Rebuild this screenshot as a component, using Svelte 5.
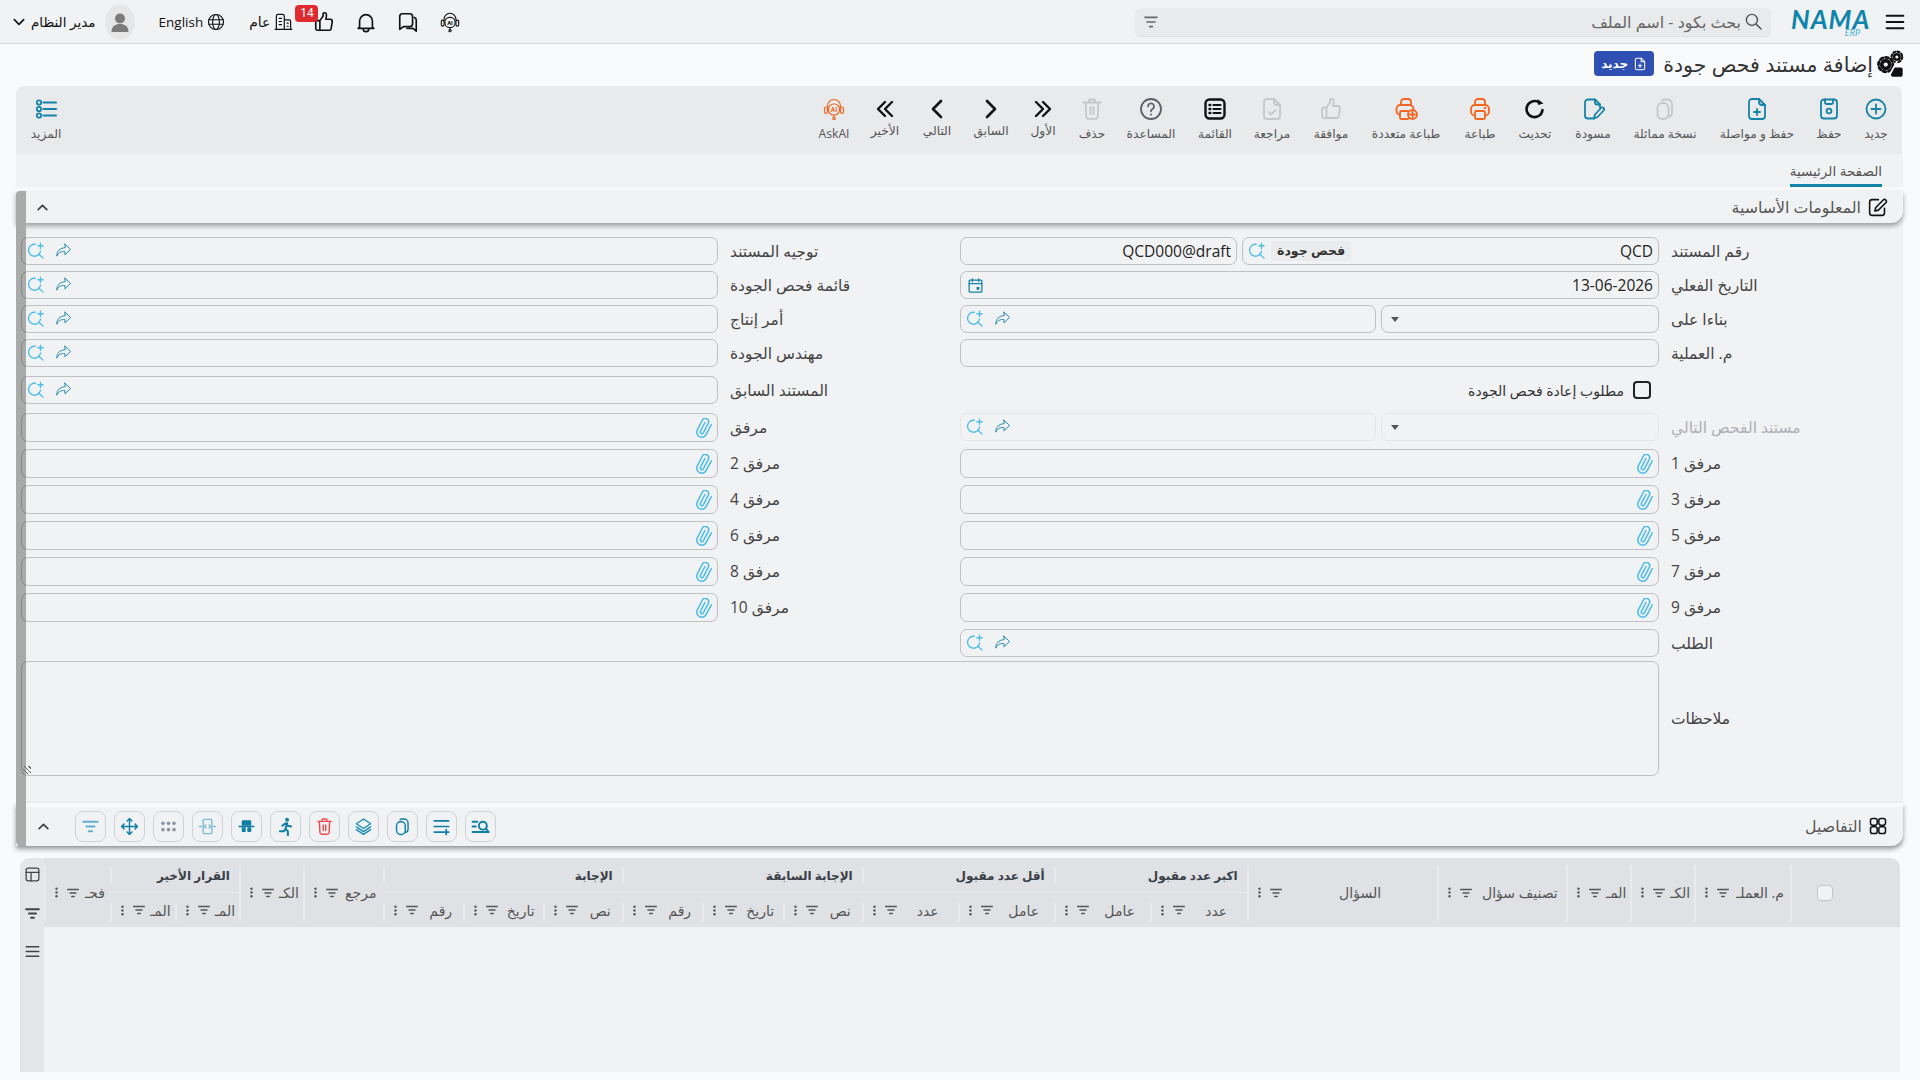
<script lang="ts">
    const I: Record<string, string> = {
        plusCircle: '<circle cx="12" cy="12" r="9.5"/><path d="M12 7.5v9M7.5 12h9"/>',
        save: '<path d="M7 2.5h10a3 3 0 0 1 3 3v13a3 3 0 0 1-3 3H7a3 3 0 0 1-3-3v-13a3 3 0 0 1 3-3z"/><path d="M8 2.5v3a1.5 1.5 0 0 0 1.5 1.5h5A1.5 1.5 0 0 0 16 5.5v-3"/><circle cx="12" cy="14" r="2.4"/>',
        filePlus: '<path d="M7 2h7l6 6v11a3 3 0 0 1-3 3H7a3 3 0 0 1-3-3V5a3 3 0 0 1 3-3z"/><path d="M14 2v3a3 3 0 0 0 3 3h3"/><path d="M12 12v6M9 15h6"/>',
        copy: '<rect x="4.5" y="6" width="11" height="16" rx="5"/><path d="M9 3.5a3 3 0 0 1 2-1h3a5 5 0 0 1 5 5v8a4 4 0 0 1-3.5 4"/>',
        draft: '<path d="M13 21.5H7a3 3 0 0 1-3-3v-13a3 3 0 0 1 3-3h7l5 5v3"/><path d="M14 2.5v3a2 2 0 0 0 2 2h3"/><path d="M13 21.5l1-4 6-6.5a1.8 1.8 0 0 1 2.6 2.5l-6 6.5z"/>',
        refresh: '<path d="M19.5 13a8 8 0 1 1-3-7.2" stroke-width="2.6"/><path d="M14.5 2l.5 6 5.5-1.5z" fill="currentColor" stroke="none"/>',
        print: '<path d="M7 8V5a3 3 0 0 1 3-3h4a3 3 0 0 1 3 3v3"/><rect x="3" y="8" width="18" height="10.5" rx="4"/><rect x="7" y="14" width="10" height="8" rx="1.5" fill="#e9eaec"/><path d="M16.5 11h1"/>',
        printMulti: '<path d="M7 8V5a3 3 0 0 1 3-3h4a3 3 0 0 1 3 3v3"/><rect x="2.5" y="8" width="17" height="10" rx="4"/><rect x="6" y="14" width="9" height="8" rx="1.5" fill="#e9eaec"/><circle cx="18.5" cy="17.5" r="4.5" fill="#e9eaec"/><path d="M18.5 15v5M16 17.5h5"/>',
        thumb: '<path d="M7.5 10.5V21H5a2 2 0 0 1-2-2v-6.5a2 2 0 0 1 2-2zm0 0l3.5-5V4a1.8 1.8 0 0 1 3.6-.5c.4 2-.2 4-.6 5.5H19a2 2 0 0 1 2 2.3l-1.2 7.9a2 2 0 0 1-2 1.8H7.5"/>',
        review: '<path d="M7 2h7l6 6v11a3 3 0 0 1-3 3H7a3 3 0 0 1-3-3V5a3 3 0 0 1 3-3z"/><path d="M14 2v3a3 3 0 0 0 3 3h3"/><path d="M8.5 15l2.5 2.5 4.5-4.5"/>',
        list: '<rect x="2.5" y="2.5" width="19" height="19" rx="4" stroke-width="2.4"/><path d="M10.5 8h7M10.5 12h7M10.5 16h7" stroke-width="2.2"/><path d="M6.5 8h.8M6.5 12h.8M6.5 16h.8" stroke-width="2.4"/>',
        help: '<circle cx="12" cy="12" r="10"/><path d="M9 9.3a3 3 0 1 1 4.5 2.7c-1 .6-1.5 1.2-1.5 2.3"/><path d="M12 17.3v.4"/>',
        trash: '<path d="M3.5 5.5h17M9 5V3.5a1 1 0 0 1 1-1h4a1 1 0 0 1 1 1V5"/><path d="M5.5 5.5l.7 14a2.5 2.5 0 0 0 2.5 2.3h6.6a2.5 2.5 0 0 0 2.5-2.3l.7-14"/><path d="M10.5 10v7M13.5 10v7"/>',
        dblRight: '<path d="M5 5l7 7-7 7M12 5l7 7-7 7" stroke-width="2.4"/>',
        dblLeft: '<path d="M12 5l-7 7 7 7M19 5l-7 7 7 7" stroke-width="2.4"/>',
        right: '<path d="M8 4l8 8-8 8" stroke-width="2.6"/>',
        left: '<path d="M16 4l-8 8 8 8" stroke-width="2.6"/>',
        ai: '<g stroke-width="1.2"><path d="M5.5 10V9a6.5 6.5 0 0 1 13 0v1"/><rect x="2.5" y="10" width="3" height="6.5" rx="1.5"/><rect x="18.5" y="10" width="3" height="6.5" rx="1.5"/><rect x="6.5" y="7" width="11" height="11" rx="5"/><path d="M12 18v2.5"/><circle cx="12" cy="21.5" r="1.2"/></g><text x="12" y="14.8" font-size="6.5" font-weight="700" text-anchor="middle" fill="currentColor" stroke="none" font-family="Roboto">AI</text>',
        more: '<circle cx="5" cy="5.5" r="2.2"/><circle cx="5" cy="12" r="2.2"/><circle cx="5" cy="18.5" r="2.2"/><path d="M9.5 5.5H22M9.5 12H22M9.5 18.5H22" stroke-width="2.2"/>',
        menu: '<path d="M2 4.5h20M2 12h20M2 19.5h20" stroke-width="2.4"/>',
        search: '<circle cx="10" cy="10" r="7"/><path d="M15.5 15.5l6 6" stroke-width="2"/>',
        sliders: '<path d="M3 5h18M6 12h12M10 19h4" stroke-width="2.4"/>',
        globe: '<circle cx="12" cy="12" r="10"/><ellipse cx="12" cy="12" rx="4.5" ry="10"/><path d="M2.5 9h19M2.5 15h19"/>',
        building: '<path d="M3 22V5a2 2 0 0 1 2-2h6a2 2 0 0 1 2 2v17M13 10h6a2 2 0 0 1 2 2v10M1.5 22h21"/><path d="M6.5 8h3M6.5 12h3M6.5 16h3M16.5 14h1.5M16.5 18h1.5"/>',
        bell: '<path d="M5 17.5V11a7 7 0 0 1 14 0v6.5l1.5 1.5h-17z"/><path d="M9 19.5a3 3 0 0 0 6 0"/>',
        chat: '<path d="M3 6a3 3 0 0 1 3-3h8a3 3 0 0 1 3 3v8a3 3 0 0 1-3 3H7l-4 3z"/><path d="M19 7a3 3 0 0 1 2 3v12l-3.5-3H11"/>',
        down: '<path d="M4 8l8 8 8-8" stroke-width="2.8"/>',
        up: '<path d="M4 16l8-8 8 8" stroke-width="3.2"/>',
        edit: '<path d="M13 3H6a3 3 0 0 0-3 3v12a3 3 0 0 0 3 3h11a3 3 0 0 0 3-3v-5"/><path d="M9 16l1-4 8.5-8.5a2 2 0 0 1 3 3L13 15z"/>',
        grid: '<rect x="3" y="3" width="8" height="8" rx="2.5"/><rect x="13" y="3" width="8" height="8" rx="2.5"/><rect x="3" y="13" width="8" height="8" rx="2.5"/><rect x="13" y="13" width="8" height="8" rx="2.5"/>',
        move: '<path d="M12 2v20M2 12h20M9 5l3-3 3 3M9 19l3 3 3-3M5 9l-3 3 3 3M19 9l3 3-3 3"/>',
        dots: '<g fill="currentColor" stroke="none"><circle cx="5" cy="8" r="2.3"/><circle cx="12" cy="8" r="2.3"/><circle cx="19" cy="8" r="2.3"/><circle cx="5" cy="16" r="2.3"/><circle cx="12" cy="16" r="2.3"/><circle cx="19" cy="16" r="2.3"/></g>',
        fit: '<rect x="6.5" y="3" width="11" height="18" rx="1.5"/><path d="M2 12h2.5M19.5 12H22M10 10l-2 2 2 2M14 10l2 2-2 2"/>',
        freeze: '<g fill="currentColor" stroke="none"><rect x="6" y="4" width="12" height="7" rx="1"/><rect x="6" y="13" width="5" height="6" rx="1"/><rect x="13" y="13" width="5" height="6" rx="1"/><rect x="2" y="11" width="20" height="2"/></g>',
        run: '<circle cx="14" cy="3.5" r="2.5" fill="currentColor" stroke="none"/><path d="M14 8l-2 7 3 3v5M12 15l-2 3H5M8 11l4-3 3 3 4 1" stroke-width="2.6"/>',
        layers: '<path d="M12 2.5l9 6-9 6-9-6z"/><path d="M3 12.5l9 6 9-6M3 16l9 6 9-6"/>',
        addRow: '<path d="M3 5h18M3 12h18M3 19h11M18 16v6M15 19h6" stroke-width="2.2"/>',
        findRow: '<circle cx="15" cy="11" r="5" stroke-width="2.4"/><path d="M19 15l3.5 4M2 6h6M2 12h4M2 19h20" stroke-width="2.4"/>',
        table: '<rect x="3" y="3" width="18" height="18" rx="3"/><path d="M3 9h18M10 9v12"/>',
        filter: '<path d="M3 6h18M7 12h10M10 18h4" stroke-width="2.8"/>',
        vdots: '<g fill="currentColor" stroke="none"><circle cx="12" cy="5" r="2.2"/><circle cx="12" cy="12" r="2.2"/><circle cx="12" cy="19" r="2.2"/></g>',
        calendar: '<rect x="3" y="4.5" width="18" height="17" rx="1.5"/><path d="M3 9.5h18M7.5 2.5v4M16.5 2.5v4"/><rect x="13.5" y="14" width="4" height="4" fill="currentColor" stroke="none"/>',
        clip: '<path transform="rotate(-18 12 12)" d="M21.4 11l-9.2 9.2a6 6 0 0 1-8.5-8.5l9.200-9.200a4 4 0 0 1 5.700 5.700l-9.200 9.200a2 2 0 0 1-2.800-2.800l8.500-8.500"/>',
        zoomPlus: '<path d="M11 3a8 8 0 1 0 7 9"/><path d="M15.5 16l6 5.500M18 1.500v7M14.500 5h7"/>',
        share: '<path stroke-width="1.3" d="M14 3l8 7.500-8 7.500v-4.500c-5-.5-9 1-11.500 6.500 0-7 4-11.500 11.500-12z"/>',
        avatar: '<circle cx="12" cy="8.500" r="5" fill="currentColor" stroke="none"/><path d="M3.500 22c0-6 4-8 8.500-8s8.500 2 8.500 8z" fill="currentColor" stroke="none"/>',
        docBadge: '<path d="M7 2h7l6 6v11a3 3 0 0 1-3 3H7a3 3 0 0 1-3-3V5a3 3 0 0 1 3-3z"/><path d="M14 2v6h6M12 12v6M9 15h6"/>',
        gear: '<g fill="#111" stroke="none"><circle cx="7.5" cy="12.5" r="5"/><circle cx="7.5" cy="12.5" r="6.2" fill="none" stroke="#111" stroke-width="2.4" stroke-dasharray="2.4 2.4"/><circle cx="7.5" cy="12.5" r="1.8" fill="#f9fafc"/><circle cx="17" cy="6" r="3.5"/><circle cx="17" cy="6" r="4.6" fill="none" stroke="#111" stroke-width="1.8" stroke-dasharray="1.8 1.8"/><circle cx="17" cy="6" r="1.3" fill="#f9fafc"/><rect x="12" y="15" width="10" height="8" rx="1.5"/><path d="M10 23l7-13" stroke="#f9fafc" stroke-width="1.5"/></g>',
    };

    const tools = [
        { label: "جديد", icon: "plusCircle", tone: "teal", w: 48 },
        { label: "حفظ", icon: "save", tone: "teal", w: 46 },
        { label: "حفظ و مواصلة", icon: "filePlus", tone: "teal", w: 98 },
        { label: "نسخة مماثلة", icon: "copy", tone: "off", w: 86 },
        { label: "مسودة", icon: "draft", tone: "teal", w: 58 },
        { label: "تحديث", icon: "refresh", tone: "black", w: 58 },
        { label: "طباعة", icon: "print", tone: "orange", w: 52 },
        { label: "طباعة متعددة", icon: "printMulti", tone: "orange", w: 96 },
        { label: "موافقة", icon: "thumb", tone: "off", w: 54 },
        { label: "مراجعة", icon: "review", tone: "off", w: 64 },
        { label: "القائمة", icon: "list", tone: "black", w: 50 },
        { label: "المساعدة", icon: "help", tone: "slate", w: 78 },
        { label: "حذف", icon: "trash", tone: "off", w: 40 },
        { label: "الأول", icon: "dblRight", tone: "black", w: 58, nav: true },
        { label: "السابق", icon: "right", tone: "black", w: 46, nav: true },
        { label: "التالي", icon: "left", tone: "black", w: 62, nav: true },
        { label: "الأخير", icon: "dblLeft", tone: "black", w: 42, nav: true },
        { label: "AskAI", icon: "ai", tone: "orange", w: 60 },
    ];

    const rows = [
        { label: "رقم المستند", kind: "doc" },
        { label: "توجيه المستند", kind: "lookup" },
        { label: "التاريخ الفعلي", kind: "date" },
        { label: "قائمة فحص الجودة", kind: "lookup" },
        { label: "بناءا على", kind: "pair" },
        { label: "أمر إنتاج", kind: "lookup" },
        { label: "م. العملية", kind: "text" },
        { label: "مهندس الجودة", kind: "lookup" },
        { label: "", kind: "check" },
        { label: "المستند السابق", kind: "lookup" },
        { label: "مستند الفحص التالي", kind: "pair", off: true },
        { label: "مرفق", kind: "attach" },
        { label: "مرفق 1", kind: "attach" },
        { label: "مرفق 2", kind: "attach" },
        { label: "مرفق 3", kind: "attach" },
        { label: "مرفق 4", kind: "attach" },
        { label: "مرفق 5", kind: "attach" },
        { label: "مرفق 6", kind: "attach" },
        { label: "مرفق 7", kind: "attach" },
        { label: "مرفق 8", kind: "attach" },
        { label: "مرفق 9", kind: "attach" },
        { label: "مرفق 10", kind: "attach" },
        { label: "الطلب", kind: "lookup" },
        { label: "", kind: "blank" },
    ];

    const gridTools = [
        { icon: "filter", color: "#5fb0cc" },
        { icon: "move", color: "#0f7fa6" },
        { icon: "dots", color: "#8f95a3" },
        { icon: "fit", color: "#7cbcd2" },
        { icon: "freeze", color: "#0f7fa6" },
        { icon: "run", color: "#0f7fa6" },
        { icon: "trash", color: "#f0484e" },
        { icon: "layers", color: "#1c8db3" },
        { icon: "copy", color: "#0f7fa6" },
        { icon: "addRow", color: "#0f7fa6" },
        { icon: "findRow", color: "#0f7fa6" },
    ];

    const columns = [
        { t: "م. العملـ", w: 96 },
        { t: "الكـ", w: 64 },
        { t: "المـ", w: 64 },
        { t: "تصنيف سؤال", w: 129 },
        { t: "السؤال", w: 191 },
        { group: "اكبر عدد مقبول", kids: [{ t: "عدد", w: 97 }, { t: "عامل", w: 96 }] },
        { group: "أقل عدد مقبول", kids: [{ t: "عامل", w: 96 }, { t: "عدد", w: 96 }] },
        { group: "الإجابة السابقة", kids: [{ t: "نص", w: 79 }, { t: "تاريخ", w: 81 }, { t: "رقم", w: 80 }] },
        { group: "الإجابة", kids: [{ t: "نص", w: 79 }, { t: "تاريخ", w: 80 }, { t: "رقم", w: 80 }] },
        { t: "مرجع", w: 80 },
        { t: "الكـ", w: 64 },
        { group: "القرار الأخير", kids: [{ t: "المـ", w: 64 }, { t: "المـ", w: 65 }] },
        { t: "فحـ", w: 66 },
    ];
</script>

{#snippet icon(name: string, size: number, cls = "")}
    <svg class={cls} width={size} height={size} viewBox="0 0 24 24" fill="none" stroke="currentColor" stroke-width="1.8" stroke-linecap="round" stroke-linejoin="round">{@html I[name]}</svg>
{/snippet}

{#snippet lookupIcons(share = true)}
    <span class="look">
        {#if share}{@render icon("share", 17, "deep")}{/if}
        {@render icon("zoomPlus", 18, "sky")}
    </span>
{/snippet}

{#snippet colCell(c: { t: string; w: number }, sub: boolean)}
    <div class="cell" class:sub style="width: {c.w}px">
        <span class="cell-text">{c.t}</span>
        {@render icon("filter", 14, "cell-filter")}
        {@render icon("vdots", 13, "cell-dots")}
    </div>
{/snippet}

<div class="page" dir="rtl">
    <header class="topbar">
        <span class="burger">{@render icon("menu", 20)}</span>
        <div class="logo">NAMA<small>ERP</small></div>
        <div class="search">
            {@render icon("search", 19, "search-ico")}
            <span class="search-text">بحث بكود - اسم الملف</span>
            {@render icon("sliders", 16, "search-filter")}
        </div>
        <div class="user-bar" dir="ltr">
            {@render icon("down", 14)}
            <span class="user-name">مدير النظام</span>
            <span class="avatar">{@render icon("avatar", 24)}</span>
            <span class="lang">English</span>
            {@render icon("globe", 18, "slim near")}
            <span class="branch">عام</span>
            {@render icon("building", 19, "slim near")}
            <span class="thumb">
                {@render icon("thumb", 22)}
                <b class="badge">14</b>
            </span>
            {@render icon("bell", 22)}
            {@render icon("chat", 22)}
            {@render icon("ai", 22)}
        </div>
    </header>

    <div class="title-row">
        {@render icon("gear", 28)}
        <h1>إضافة مستند فحص جودة</h1>
        <span class="status">{@render icon("docBadge", 14)} جديد</span>
    </div>

    <div class="toolbar">
        {#each tools as t}
            <div class="tool {t.tone}" class:nav={t.nav} style="width: {t.w}px">
                {@render icon(t.icon, 24)}
                <span>{t.label}</span>
            </div>
        {/each}
        <div class="tool teal more">
            {@render icon("more", 24)}
            <span>المزيد</span>
        </div>
    </div>

    <div class="tabs"><span class="tab">الصفحة الرئيسية</span></div>

    <section class="panel">
        <div class="sec-head basic">
            {@render icon("edit", 21, "black")}
            <span>المعلومات الأساسية</span>
            <span class="chev">{@render icon("up", 13)}</span>
        </div>

        <div class="form">
            {#each rows as r}
                {#if r.kind === "check"}
                    <label class="check-field">
                        <span class="box"></span>
                        مطلوب إعادة فحص الجودة
                    </label>
                {:else if r.kind !== "blank"}
                    <div class="lbl" class:off={r.off}>{r.label}</div>
                    {#if r.kind === "doc"}
                        <div class="split">
                            <div class="input chipped">
                                <span class="val">QCD</span>
                                <span class="chip">فحص جودة</span>
                                {@render lookupIcons(false)}
                            </div>
                            <div class="input draft"><span class="val">QCD000@draft</span></div>
                        </div>
                    {:else if r.kind === "date"}
                        <div class="input">
                            <span class="val">13-06-2026</span>
                            {@render icon("calendar", 17, "deep push")}
                        </div>
                    {:else if r.kind === "lookup"}
                        <div class="input">{@render lookupIcons()}</div>
                    {:else if r.kind === "pair"}
                        <div class="split pair" class:off={r.off}>
                            <div class="input select"><span class="caret"></span></div>
                            <div class="input">{@render lookupIcons()}</div>
                        </div>
                    {:else if r.kind === "attach"}
                        <div class="input attach">{@render icon("clip", 20, "sky")}</div>
                    {:else}
                        <div class="input"></div>
                    {/if}
                {:else}
                    <div></div><div></div>
                {/if}
            {/each}
            <div class="lbl notes-lbl">ملاحظات</div>
            <div class="notes"><span class="grip"></span></div>
        </div>

        <div class="sec-head details">
            {@render icon("grid", 20, "black")}
            <span>التفاصيل</span>
            <div class="grid-tools" dir="ltr">
                <span class="chev">{@render icon("up", 13)}</span>
                {#each gridTools as g}
                    <span class="grid-btn" style="color: {g.color}">{@render icon(g.icon, 19)}</span>
                {/each}
            </div>
        </div>
    </section>

    <div class="table">
        <div class="table-main">
            <div class="thead">
                <div class="cell check-cell"><span class="mini-box"></span></div>
                {#each columns as c}
                    {#if c.kids}
                        <div class="group">
                            <div class="group-title">{c.group}</div>
                            <div class="group-kids">
                                {#each c.kids as k}
                                    {@render colCell(k, true)}
                                {/each}
                            </div>
                        </div>
                    {:else}
                        {@render colCell(c, false)}
                    {/if}
                {/each}
            </div>
            <div class="tbody"></div>
        </div>
        <div class="side">
            {@render icon("table", 17)}
            {@render icon("filter", 17)}
            {@render icon("menu", 15)}
        </div>
    </div>
</div>

<style>
    :global(body) {
        margin: 0;
        background: #f9fafc;
    }

    .page {
        width: 1920px;
        height: 1080px;
        overflow: hidden;
        font-family: "Open Sans", "Noto Sans", "DejaVu Sans", sans-serif;
        color: #333;
        background: #f9fafc;
    }

    svg {
        display: block;
        flex: none;
    }

    .sky { color: #4cbce9; }
    .deep { color: #1583a8; }
    .black { color: #111; }
    .slim { stroke-width: 1.5; }

    .topbar {
        display: flex;
        align-items: center;
        height: 43px;
        border-bottom: 1px solid #d6d7d9;
        background: #f1f2f4;
    }

    .burger {
        margin-right: 15px;
        color: #111;
    }

    .logo {
        position: relative;
        width: 79px;
        height: 28px;
        margin-right: 15px;
        direction: ltr;
        font: italic 700 26px/22px Lato, sans-serif;
        letter-spacing: 1px;
        color: #0f84aa;
    }

    .logo small {
        position: absolute;
        right: 10px;
        top: 20px;
        font-size: 9px;
        font-weight: 400;
        line-height: 10px;
        letter-spacing: 0;
        color: #4bb0cc;
    }

    .search {
        display: flex;
        align-items: center;
        width: 636px;
        height: 28px;
        margin-right: 20px;
        padding: 0 8px;
        box-sizing: border-box;
        border-radius: 6px;
        background: #e9eaec;
        box-shadow: 0 1px 1px rgba(0, 0, 0, .08);
        color: #555;
    }

    .search-text {
        margin-right: 3px;
        font-size: 16px;
        color: #666;
    }

    .search-filter {
        margin-right: auto;
        color: #666;
    }

    .user-bar {
        display: flex;
        align-items: center;
        margin-right: auto;
        padding-left: 12px;
        color: #111;
    }

    .user-name {
        margin-left: 5px;
        font-size: 13.5px;
    }

    .avatar {
        display: flex;
        align-items: center;
        justify-content: center;
        width: 30px;
        height: 36px;
        margin-left: 9px;
        border-radius: 50%;
        background: #e6e6e7;
        color: #7b7b7c;
    }

    .lang {
        margin-left: 24px;
        font-size: 13.5px;
    }

    .user-bar > svg:first-child { margin-left: 0; }
    .user-bar > .near { margin-left: 4px; }

    .branch {
        margin-left: 24px;
        font-size: 14px;
    }

    .thumb {
        position: relative;
        margin-left: 20px;
    }

    .user-bar > .thumb + svg { margin-left: 20px; }
    .user-bar > .thumb + svg + svg { margin-left: 20px; }
    .user-bar > .thumb + svg + svg + svg { margin-left: 20px; }

    .badge {
        position: absolute;
        left: -18px;
        top: -6px;
        min-width: 23px;
        height: 17px;
        border-radius: 4px;
        background: #e02a2f;
        color: #fff;
        font: 400 12px/17px Roboto, sans-serif;
        text-align: center;
    }

    .title-row {
        display: flex;
        align-items: center;
        gap: 4px;
        height: 42px;
        padding-right: 15px;
        padding-bottom: 3px;
        box-sizing: border-box;
    }

    h1 {
        margin: 0;
        font-size: 20.5px;
        font-weight: 400;
        color: #333;
    }

    .status {
        display: flex;
        align-items: center;
        gap: 5px;
        height: 25px;
        margin-right: 5px;
        padding: 0 7px;
        border-radius: 4px;
        background: #2f4fb2;
        color: #fff;
        font-size: 12px;
        font-weight: 700;
    }

    .toolbar {
        display: flex;
        height: 68px;
        margin: 0 18px 0 16px;
        padding-right: 2px;
        border-radius: 8px 8px 0 0;
        background: #e9eaec;
    }

    .tool {
        display: flex;
        flex-direction: column;
        align-items: center;
        padding-top: 11px;
        box-sizing: border-box;
    }

    .tool span {
        margin-top: 5px;
        font-size: 12.2px;
        line-height: 16px;
        white-space: nowrap;
        color: #555;
    }

    .tool.nav span { margin-top: 2px; }
    .tool.teal { color: #1583a8; }
    .tool.orange { color: #f06520; }
    .tool.black { color: #111; }
    .tool.slate { color: #5c626d; }
    .tool.off { color: #c5c7ca; }
    .tool.more {
        width: 60px;
        margin-right: auto;
    }

    .tabs {
        display: flex;
        height: 33px;
        margin: 0 17px 0 16px;
        padding-right: 21px;
        background: #f1f2f4;
    }

    .tab {
        height: 30px;
        border-bottom: 3px solid #1583a8;
        font-size: 13.5px;
        line-height: 34px;
        color: #555;
    }

    .panel {
        position: relative;
        height: 656px;
        margin: 4px 17px 0 16px;
        background: #f1f2f4;
    }

    .panel::before {
        content: "";
        position: absolute;
        z-index: 1;
        left: 0;
        top: 0;
        width: 10px;
        height: 656px;
        border-radius: 4px 0 0 6px;
        background: #a9aaaa;
    }

    .sec-head {
        display: flex;
        align-items: center;
        gap: 6px;
        padding-right: 15px;
        border-radius: 0 0 12px 0;
        box-shadow: 0 3px 5px rgba(0, 0, 0, .35);
        background: #f1f2f4;
        font-size: 15.8px;
        color: #555;
    }

    .basic {
        height: 32px;
    }

    .chev {
        color: #444;
    }

    .basic .chev {
        margin-right: auto;
        margin-left: 20px;
    }

    .form {
        position: relative;
        z-index: 2;
        display: grid;
        grid-template-columns: 241px 699px 242px 697px;
        grid-template-rows: 34px 34px 34px 37px 37px 36px 36px 36px 36px 36px 36px 32px 115px;
        margin: 14px 3px 0 5px;
    }

    .lbl {
        height: 28px;
        padding-left: 12px;
        font-size: 15.5px;
        line-height: 28px;
        text-align: left;
        color: #444;
    }

    .lbl.off {
        color: #aeb0b4;
    }

    .input {
        display: flex;
        align-items: center;
        height: 28px;
        padding: 0 5px;
        box-sizing: border-box;
        border: 1.5px solid rgba(0, 0, 0, .2);
        border-radius: 7px;
    }

    .val {
        font-size: 15.5px;
        color: #222;
    }

    .push {
        margin-right: auto;
        margin-left: 1px;
    }

    .look {
        display: flex;
        gap: 10px;
        margin-right: auto;
    }

    .split {
        display: flex;
        gap: 5px;
    }

    .split .input {
        flex: none;
    }

    .chipped {
        width: 417px;
    }

    .draft {
        width: 277px;
    }

    .chip {
        margin-right: auto;
        padding: 0 6px;
        border-radius: 4px;
        background: #ebecee;
        font-size: 12.5px;
        font-weight: 700;
        line-height: 20px;
    }

    .chip + .look {
        margin-right: 5px;
    }

    .pair .select {
        width: 278px;
    }

    .pair .input:last-child {
        width: 416px;
    }

    .pair.off .input {
        border-color: #e4e5e7;
    }

    .caret {
        margin-right: auto;
        margin-left: 4px;
        border: 4.5px solid transparent;
        border-top: 5px solid #555;
        border-bottom: 0;
    }

    .attach {
        height: 29px;
        padding: 0 3px;
    }

    .check-field {
        grid-column: span 2;
        display: flex;
        align-items: center;
        gap: 9px;
        height: 28px;
        padding-right: 249px;
        font-size: 14px;
        color: #333;
    }

    .box {
        width: 14px;
        height: 14px;
        border: 2px solid #222;
        border-radius: 4px;
    }

    .notes-lbl {
        padding-top: 43px;
    }

    .notes {
        position: relative;
        grid-column: span 3;
        border: 1.5px solid rgba(0, 0, 0, .2);
        border-radius: 7px;
    }

    .grip {
        position: absolute;
        left: 1px;
        bottom: 1px;
        width: 8px;
        height: 8px;
        background: repeating-linear-gradient(45deg, #666 0 1px, transparent 1px 3px);
    }

    .details {
        height: 38px;
        margin-top: 27px;
        padding-bottom: 1px;
        border-top: 4px solid #f9fafc;
        box-shadow: 0 3px 5px rgba(0, 0, 0, .4);
    }

    .grid-tools {
        display: flex;
        align-items: center;
        gap: 8px;
        margin-right: auto;
        padding-left: 21px;
    }

    .grid-tools .chev {
        margin-right: 17px;
    }

    .grid-btn {
        display: flex;
        align-items: center;
        justify-content: center;
        width: 31px;
        height: 31px;
        box-sizing: border-box;
        border: 1px solid #cfd2d8;
        border-radius: 8px;
    }

    .table {
        display: flex;
        height: 214px;
        margin: 11px 20px 0 20px;
    }

    .table-main {
        flex: 1;
        min-width: 0;
    }

    .thead {
        display: flex;
        height: 69px;
        border-radius: 0 10px 0 0;
        background: #dfe1e5;
    }

    .cell {
        position: relative;
        display: flex;
        align-items: center;
        height: 69px;
        padding-left: 6px;
        box-sizing: border-box;
        font-size: 14px;
        color: #555;
    }

    .cell::after {
        content: "";
        position: absolute;
        left: 0;
        top: 7px;
        bottom: 6px;
        width: 2px;
        background: #e9eaec;
    }

    .cell.sub {
        height: 34px;
        padding-left: 6px;
    }

    .cell.sub::after {
        top: 10px;
        bottom: 6px;
    }

    .cell-text {
        flex: 1;
        min-width: 0;
        overflow: hidden;
        white-space: nowrap;
        text-align: center;
    }

    :global(.cell-filter) {
        margin-left: 3px;
    }

    :global(.cell-dots) {
        margin-left: 0;
    }

    .check-cell {
        flex: none;
        width: 110px;
        justify-content: flex-start;
        padding-right: 67px;
    }

    .mini-box {
        width: 14px;
        height: 14px;
        border: 1px solid #c3c5c9;
        border-radius: 4px;
        background: #f1f2f4;
    }

    .group {
        position: relative;
        display: flex;
        flex-direction: column;
    }

    .group::after {
        content: "";
        position: absolute;
        left: 0;
        top: 9px;
        height: 17px;
        width: 2px;
        background: #e9eaec;
    }

    .group-title {
        height: 35px;
        box-sizing: border-box;
        padding-right: 9px;
        border-bottom: 1px solid #e9eaec;
        font-size: 12px;
        font-weight: 700;
        line-height: 36px;
        white-space: nowrap;
        color: #3a3f47;
    }

    .group-kids {
        display: flex;
    }

    .tbody {
        height: 145px;
        background: #f1f2f4;
    }

    .side {
        display: flex;
        flex-direction: column;
        align-items: center;
        gap: 22px;
        width: 24px;
        padding-top: 8px;
        box-sizing: border-box;
        border-radius: 10px 0 0 0;
        background: #e4e6e9;
        color: #444;
    }
</style>
